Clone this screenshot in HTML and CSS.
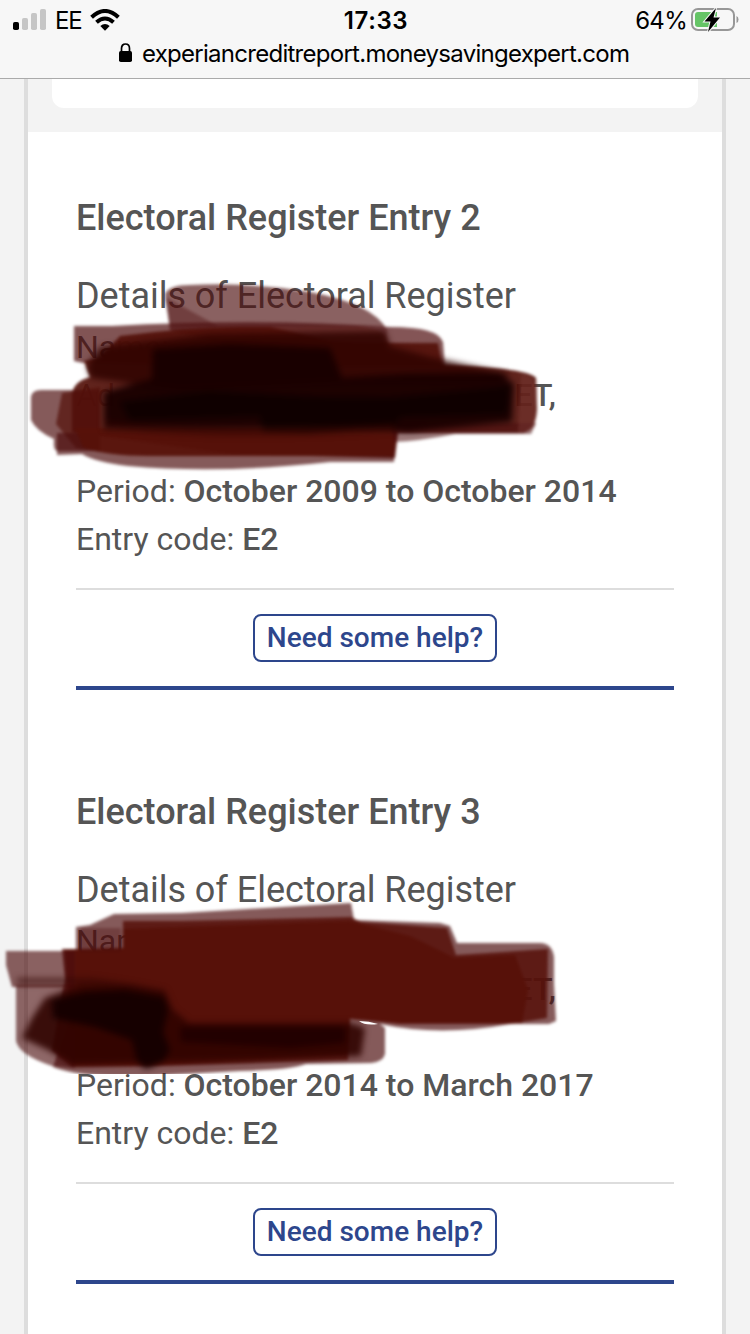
FILE: index.html
```
<!DOCTYPE html>
<html lang="en">
<head>
<meta charset="utf-8">
<title>Credit report</title>
<link rel="stylesheet" href="styles.css">
</head>
<body>
<header class="browser">
  <div class="status">
    <div class="status-left">
      <svg class="signal" width="33" height="22" viewBox="0 0 33 22"><rect x="0" y="13" width="6" height="8" rx="1.8"/><g fill="#c6c6c6"><rect x="9" y="9" width="6" height="12" rx="1.8"/><rect x="18" y="4" width="6" height="17" rx="1.8"/><rect x="27" y="0" width="6" height="21" rx="1.8"/></g></svg>
      <span class="carrier">EE</span>
      <svg class="wifi" width="30" height="22" viewBox="0 0 30 22"><g fill="none" stroke="#000" stroke-width="4"><path d="M1.6 8.2Q15-4.200 28.400 8.200"/><path d="M6.500 13.300Q15 5.700 23.500 13.300"/></g><path d="M10.300 17Q15 13 19.700 17L15 21.700Z"/></svg>
    </div>
    <span class="time">17:33</span>
    <div class="status-right">
      <span class="percent">64%</span>
      <svg class="battery" width="48" height="26" viewBox="0 0 48 26"><rect x="1" y="2" width="42" height="21" rx="6" fill="none" stroke="#979797" stroke-width="2"/><path d="M45.500 9q2 .5 2 3.500t-2 3.500z" fill="#979797"/><path d="M7 5H26V20H7Q4 20 4 17V8Q4 5 7 5Z" fill="#65c466"/><path d="M25 1 13.500 14.500H19.500L17 25 29 10.500H22.500Z" fill="#000" stroke="#f7f7f7" stroke-width="2" paint-order="stroke"/></svg>
    </div>
  </div>
  <div class="address">
    <svg width="14" height="20" viewBox="0 0 14 20"><rect x="0" y="8" width="13" height="11" rx="1.800"/><path d="M2.500 9V5.500C2.500-.5 10.500-.5 10.500 5.500V9" fill="none" stroke="#000" stroke-width="1.700"/></svg>
    <span class="url">experiancreditreport.moneysavingexpert.com</span>
  </div>
</header>
<main class="page">
  <div class="previous"><div class="previous-card"></div></div>
  <section class="entry">
    <h2>Electoral Register Entry 2</h2>
    <h3>Details of Electoral Register</h3>
    <div class="details">
      <p>Name:</p>
      <p class="row"><span>Ad</span><b>ET,</b></p>
      <p>&nbsp;</p>
      <p class="period">Period: <b>October 2009 to October 2014</b></p>
      <p class="code">Entry code: <b>E2</b></p>
    </div>
    <div class="help"><button>Need some help?</button></div>
    <svg class="marker" width="750" height="200" viewBox="0 280 750 200">
      <defs><filter id="soft" x="-5%" y="-10%" width="110%" height="120%" color-interpolation-filters="sRGB"><feGaussianBlur stdDeviation="1.500"/></filter>
      <filter id="smudge" x="-10%" y="-20%" width="120%" height="140%" color-interpolation-filters="sRGB"><feGaussianBlur stdDeviation="3"/></filter></defs>
      <g filter="url(#soft)" fill="#4b0c0c">
        <path d="M165 294Q169 285 190 285Q250 282 310 292Q374 304 387 330L386 345H230L170 330Z" opacity=".65"/>
        <path d="M165 297 218 326H170Z" opacity=".4"/>
        <path d="M74 326H112Q260 318 390 327Q438 327 443 342L445 367H230L83 363 74 361Z" opacity=".7"/>
        <path d="M120 336Q180 328 240 327H360Q386 329 388 343L438 343 442 365Q530 368 536 378L537 409Q536 430 523 433H398L395 458 230 454 72 432 72 396Q72 382 90 377L84 361 100 358Z" fill="#54110a" opacity=".92"/>
        <path d="M31 397Q32 390 41 390H100V451H57Q53 450 54 439Q36 431 31 420Z" opacity=".68"/>
        <path d="M62 393 100 387V452L76 448 56 424Z" fill="#54110a" opacity=".7"/>
        <path d="M57 433H100L396 436 394 462H330Q220 474 128 466Q95 462 82 454L57 455Z" opacity=".68"/>
        <path d="M75 428H397L393 456H150Q105 456 83 447Z" fill="#57120a" opacity=".94"/>
        <path d="M390 423H536L531 434H455Q420 441 394 442Z" opacity=".55"/>
        <path d="M521 374Q537 376 537 390L535 426Q530 433 518 433Z" fill="#783a36" opacity=".45"/>
        <path d="M270 327H390Q437 328 441 339Q390 345 330 341Z" fill="#89575a" opacity=".4"/>
      </g>
      <g filter="url(#smudge)">
        <path d="M100 347 210 334 385 331 390 346 430 357 510 374 500 382 360 381 180 390 91 378 87 366Z" fill="#300300" opacity=".88"/>
        <path d="M153 349 230 344 330 348 342 378 405 374 500 373 514 384 512 422 410 432 299 427 104 429 104 392 152 379Z" fill="#180000" opacity=".94"/>
        <path d="M120 402 210 391 315 397 390 398 510 386 507 414 400 417 395 426 310 434 263 432 260 416 130 420Z" fill="#070000" opacity=".65"/>
        <path d="M104 424Q210 437 395 427" stroke="#310300" stroke-width="8" fill="none" opacity=".6"/>
      </g>
    </svg>
  </section>
  <section class="entry">
    <h2>Electoral Register Entry 3</h2>
    <h3>Details of Electoral Register</h3>
    <div class="details">
      <p>Name:</p>
      <p class="row"><span>Ad</span><b>ET,</b></p>
      <p>&nbsp;</p>
      <p class="period">Period: <b>October 2014 to March 2017</b></p>
      <p class="code">Entry code: <b>E2</b></p>
    </div>
    <div class="help"><button>Need some help?</button></div>
    <svg class="marker" width="750" height="200" viewBox="0 874 750 200">
      <g filter="url(#soft)" fill="#4b0c0c">
        <path d="M76 927 90 925 114 914 182 913 351 903 354 920 440 923 450 926 457 943 540 943Q552 943 554 957L554 984 556 1021 549 1024 510 1024Q440 1037 380 1024L385 1028 385 1054Q383 1062 371 1063L306 1064Q290 1070 240 1071L148 1076Q80 1078 53 1067L76 1000Z" opacity=".68"/>
        <path d="M123 921H182L351 917 361 922 447 928 456 955 548 949 547 1018 510 1024H400L350 1019 348 1060 157 1066 72 1067 52 1050 65 979 62 949H80L123 948Z" fill="#57120a" opacity=".86"/>
        <path d="M123 929 350 921 410 936 455 958 515 955 528 990 522 1023H400L350 1018 348 1054 157 1065 72 1065 65 950 123 948Z" fill="#57120a" opacity=".95"/>
        <path d="M6 951H75V987H12L6 965Z" opacity=".65"/>
        <path d="M16 985H75V1068L52 1066Q19 1055 16 1041Z" opacity=".62"/>
        <path d="M80 928H121V952H80Z" opacity=".35"/>
      </g>
      <g filter="url(#smudge)">
        <path d="M22 1038 32 1018 45 998 80 985 130 985 165 991 173 1010 189 1023H350L365 1028 361 1056 262 1060 73 1065 48 1050Z" fill="#300300" opacity=".9"/>
        <path d="M52 1000 86 992 125 990 164 997 168 1010 163 1032 170 1050 163 1062 146 1069 137 1062 132 1040 95 1027 53 1018Z" fill="#150000" opacity=".94"/>
        <path d="M180 1027H345V1043L290 1048 181 1042Z" fill="#200000" opacity=".85"/>
        <path d="M17 981H90Q120 984 164 993" stroke="#320502" stroke-width="6" fill="none" opacity=".6"/>
      </g>
      <path d="M359 1021Q365 1026 378 1024Q369 1021 359 1021Z" fill="#fff"/>
    </svg>
  </section>
</main>
</body>
</html>
```
FILE: styles.css
```
* { box-sizing: border-box; }
body { margin: 0; width: 750px; height: 1334px; overflow: hidden; background: #f3f3f3; color: #555; font-family: Roboto, sans-serif; }
.browser { height: 79px; background: #f7f7f7; border-bottom: 1px solid #aaa; color: #000; font-family: Inter, sans-serif; }
.status { display: grid; grid-template-columns: 1fr auto 1fr; height: 40px; padding: 0 11px 0 13px; align-items: center; }
.status-left, .status-right { display: flex; align-items: center; }
.status-left { gap: 9px; }
.status-right { justify-content: flex-end; gap: 4px; }
.signal, .wifi { display: block; }
.carrier { font-size: 24px; letter-spacing: -1.2px; }
.time { font-size: 24px; font-weight: 600; letter-spacing: .6px; }
.percent { font-size: 24px; letter-spacing: -.7px; }
.battery { margin-top: -1px; }
.address { display: flex; height: 26px; gap: 9px; padding-left: 119px; align-items: center; }
.url { font-size: 24px; letter-spacing: -.73px; white-space: nowrap; }
.page { width: 702px; height: 1255px; margin: 0 24px; border: 4px solid #ddd; border-width: 0 4px; background: #fff; overflow: visible; }
.previous { height: 53px; padding: 0 24px; background: #f3f3f3; }
.previous-card { height: 29px; border-radius: 0 0 12px 12px; background: #fff; }
.entry { position: relative; height: 594px; padding: 62px 48px 0; }
h2, h3, p { margin: 0; white-space: nowrap; }
h2 { font-size: 36px; line-height: 48px; font-weight: 500; }
h3 { margin-top: 30px; font-size: 36px; line-height: 48px; font-weight: 400; letter-spacing: -.03px; }
.details { height: 268px; margin-top: 2px; padding-top: 1px; border-bottom: 2px solid #ddd; font-size: 32px; line-height: 48px; }
.details b { font-weight: 500; }
.row { display: flex; justify-content: space-between; width: 480px; }
.help { display: flex; justify-content: center; padding: 24px 0; border-bottom: 4px solid #2d468c; }
.help button { width: 244px; height: 48px; padding: 0; border: 2px solid #2d468c; border-radius: 8px; background: #fff; color: #2d468c; font: 500 28px/44px Roboto, sans-serif; white-space: nowrap; }
.marker { position: absolute; left: -28px; top: 148px; pointer-events: none; }
```
